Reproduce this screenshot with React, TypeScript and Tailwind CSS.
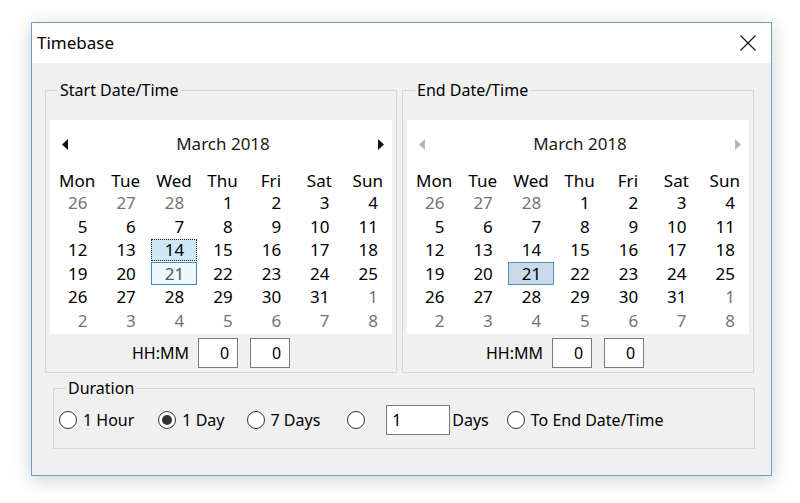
import React from 'react';

type Day = { n: number; muted: boolean };

const DAY_NAMES = ['Mon', 'Tue', 'Wed', 'Thu', 'Fri', 'Sat', 'Sun'];

// March 2018 grid, starting Monday Feb 26
function buildWeeks(): Day[][] {
  const weeks: Day[][] = [];
  const start = new Date(2018, 1, 26);
  for (let w = 0; w < 6; w++) {
    const row: Day[] = [];
    for (let d = 0; d < 7; d++) {
      const date = new Date(start);
      date.setDate(start.getDate() + w * 7 + d);
      row.push({ n: date.getDate(), muted: date.getMonth() !== 2 });
    }
    weeks.push(row);
  }
  return weeks;
}

const weeks = buildWeeks();

function Arrow({ dir, disabled }: { dir: 'left' | 'right'; disabled?: boolean }) {
  const fill = disabled ? '#b4b4b4' : '#111111';
  return (
    <svg width="6" height="11" viewBox="0 0 6 11">
      {dir === 'left' ? (
        <polygon points="6,0 6,11 0,5.5" fill={fill} />
      ) : (
        <polygon points="0,0 0,11 6,5.5" fill={fill} />
      )}
    </svg>
  );
}

function MonthCalendar({ variant }: { variant: 'start' | 'end' }) {
  const disabled = variant === 'end';

  const cellClass = (day: Day) => {
    if (!day.muted && variant === 'start' && day.n === 14) {
      return 'border-dotted border-[#1f1f1f] bg-[#cfe8f6] text-black';
    }
    if (!day.muted && variant === 'start' && day.n === 21) {
      return 'border-[#3f87c1] bg-[#eef7fc] text-[#4b5862]';
    }
    if (!day.muted && variant === 'end' && day.n === 21) {
      return 'border-[#5b8db6] bg-[#c9dbeb] text-black';
    }
    return day.muted ? 'border-transparent text-[#737373]' : 'border-transparent text-black';
  };

  return (
    <div className="bg-white h-[214px] w-full flex flex-col text-[17px]">
      {/* Header */}
      <div className="h-[48px] flex items-center pl-[12px] pr-[8px]">
        <Arrow dir="left" disabled={disabled} />
        <div className="flex-1 text-center text-[#1a1a1a]">March 2018</div>
        <Arrow dir="right" disabled={disabled} />
      </div>

      {/* Day names */}
      <div className="ml-[3px] w-[339px] grid grid-cols-7 h-[23px] items-center">
        {DAY_NAMES.map((name) => (
          <div key={name} className="text-center text-black">
            {name}
          </div>
        ))}
      </div>

      {/* Days */}
      <div className="ml-[3px] w-[339px] grid grid-cols-7 grid-rows-6 h-[141px]">
        {weeks.map((row, wi) =>
          row.map((day, di) => (
            <div
              key={`${wi}-${di}`}
              className={`mx-[1px] my-[0.5px] border flex items-center justify-end pr-[12px] ${cellClass(day)}`}
            >
              {day.n}
            </div>
          ))
        )}
      </div>
    </div>
  );
}

function TimeInputs({ offset }: { offset: string }) {
  return (
    <div className={`h-[38px] flex items-center ${offset}`}>
      <span className="text-[16px] text-black">HH:MM</span>
      <input
        readOnly
        value="0"
        className="ml-[9px] w-[40px] h-[30px] border border-[#7a7a7a] bg-white text-right pr-[8px] text-[16px] outline-none"
      />
      <input
        readOnly
        value="0"
        className="ml-[12px] w-[40px] h-[30px] border border-[#7a7a7a] bg-white text-right pr-[8px] text-[16px] outline-none"
      />
    </div>
  );
}

function Radio({ checked, label, className = '' }: { checked?: boolean; label?: string; className?: string }) {
  return (
    <label className={`flex items-center ${className}`}>
      <span className="w-[18px] h-[18px] rounded-full border border-[#333333] bg-white flex items-center justify-center">
        {checked && <span className="w-[10px] h-[10px] rounded-full bg-[#333333]" />}
      </span>
      {label && <span className="ml-[6px] text-[16px] text-black">{label}</span>}
    </label>
  );
}

export default function App() {
  return (
    <div className="w-[800px] h-[503px] bg-white overflow-hidden pt-[22px] pl-[31px] font-['Noto_Sans',sans-serif]">
      <div className="w-[741px] h-[454px] border border-[#6f9ec9] bg-[#f0f0f0] flex flex-col shadow-[0_4px_18px_rgba(0,0,0,0.2)]">
        {/* Title bar */}
        <div className="h-[40px] bg-white flex items-center justify-between pl-[5px] pr-[15px]">
          <span className="text-[17px] text-black">Timebase</span>
          <svg width="16" height="16" viewBox="0 0 16 16">
            <line x1="0.5" y1="0.5" x2="15.5" y2="15.5" stroke="#111" strokeWidth="1.1" />
            <line x1="15.5" y1="0.5" x2="0.5" y2="15.5" stroke="#111" strokeWidth="1.1" />
          </svg>
        </div>

        {/* Body */}
        <div className="flex-1 pt-[15px] pl-[13px]">
          <div className="flex">
            <fieldset className="w-[352px] border border-[#d6d6d6] px-[4px] pt-[18px]">
              <legend className="ml-[8px] px-[2px] text-[16px] leading-[24px] text-black">Start Date/Time</legend>
              <MonthCalendar variant="start" />
              <TimeInputs offset="pl-[82px]" />
            </fieldset>

            <fieldset className="ml-[5px] w-[352px] border border-[#d6d6d6] px-[4px] pt-[18px]">
              <legend className="ml-[8px] px-[2px] text-[16px] leading-[24px] text-black">End Date/Time</legend>
              <MonthCalendar variant="end" />
              <TimeInputs offset="pl-[79px]" />
            </fieldset>
          </div>

          {/* Duration */}
          <fieldset className="mt-[3px] ml-[8px] w-[702px] border border-[#d6d6d6] px-[5px] pt-[5px] pb-[13px]">
            <legend className="ml-[7px] px-[2px] text-[16px] leading-[24px] text-black">Duration</legend>
            <div className="h-[30px] flex items-center">
              <Radio label="1 Hour" />
              <Radio checked label="1 Day" className="ml-[24px]" />
              <Radio label="7 Days" className="ml-[22px]" />
              <Radio className="ml-[27px]" />
              <input
                readOnly
                value="1"
                className="ml-[21px] w-[64px] h-[30px] border border-[#7a7a7a] bg-white pl-[5px] text-[16px] outline-none"
              />
              <span className="ml-[2px] text-[16px] text-black">Days</span>
              <Radio label="To End Date/Time" className="ml-[18px]" />
            </div>
          </fieldset>
        </div>
      </div>
    </div>
  );
}
